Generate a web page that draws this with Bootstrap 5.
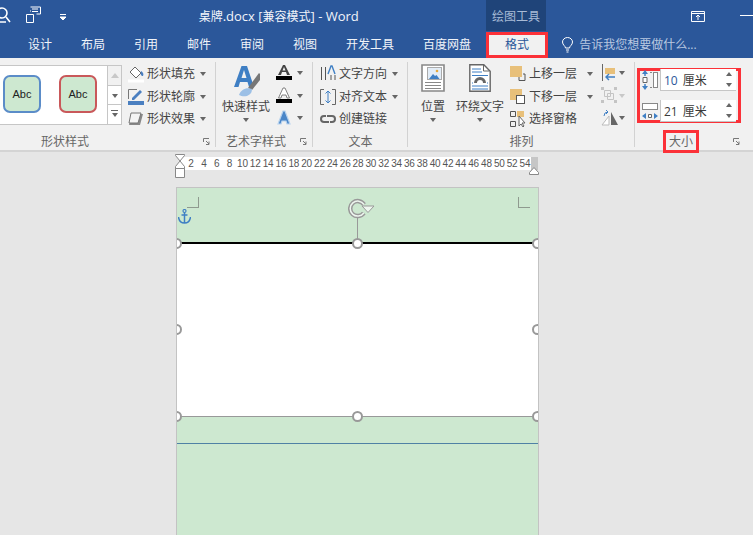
<!DOCTYPE html>
<html lang="zh"><head><meta charset="utf-8"><title>桌牌.docx - Word</title>
<link href="https://cdn.jsdelivr.net/npm/bootstrap@5.3.0/dist/css/bootstrap.min.css" rel="stylesheet">
<style>
html,body{height:535px;overflow:hidden;}
body{width:753px;background:#e6e6e6;font:12px/16px "Open Sans","Noto Sans CJK SC",sans-serif;color:#444;}
.title-bar{height:31px;background:#2b579a;color:#fff;position:relative;}
.qa-icons{width:199px;padding-top:6px;}
.qa-one{margin-left:-4px;margin-right:13px;}
.qa-two{margin-right:18px;}
.qa-three{margin-top:8px;}
.doc-title{width:288px;font-size:13px;line-height:33px;color:#f2f5fa;}
.han-s{font-size:12px;}
.tool-head{width:60px;background:#1f4479;color:#a8bbd6;line-height:33px;text-align:center;}
.win-up{margin-left:145px;margin-top:11px;}
.win-min{margin-left:35px;margin-top:15px;width:13px;height:1px;background:#fff;}
.tab-row{height:27px;background:#2b579a;color:#fff;padding-left:28px;line-height:27px;}
.tab-one{margin-right:29px;color:#f1f4f9;}
.tab-gap{margin-right:15px;}
.tab-now{width:62px;height:26px;margin-right:13px;margin-top:1px;background:#f1f1f1;color:#2b579a;text-align:center;line-height:20px;border:3px solid #fb3138;}
.tell-me{color:#b9c8e0;}
.tell-me svg{margin-right:5px;}
.ribbon{height:94px;background:#f1f1f1;border-bottom:2px solid #d4d4d4;}
.rib-group{height:85px;position:relative;flex:none;padding-top:5px;}
.rib-group::after{content:"";position:absolute;right:0;top:4px;height:85px;width:1px;background:#d2d2d2;}
.gr-a{width:216px;}.gr-b{width:97px;padding-left:6px;}.gr-c{width:95px;padding-left:7px;}.gr-d{width:227px;padding-left:13px;}.gr-e{width:111px;padding-left:2px;}
.gr-e::after{display:none;}
.rib-label{position:absolute;left:0;right:0;top:75px;text-align:center;line-height:18px;color:#666;}
.lab-a{right:86px;}.lab-b{right:17px;}
.launch{position:absolute;right:6px;top:80px;}
.gallery{width:122px;height:60px;margin-top:2px;background:#fff;border:1px solid #c6c6c6;border-left:0;margin-right:6px;flex:none;}
.thumb-list{width:108px;padding-left:3px;padding-top:9px;gap:18px;}
.thumb{width:38px;height:38px;border:2px solid #5b8cc8;border-radius:7px;background:#cde8d0;color:#222;font:11px/34px "Liberation Sans",sans-serif;text-align:center;}
.thumb-red{border-color:#c9585a;}
.scrolls{width:14px;border-left:1px solid #c6c6c6;}
.scroll-one{height:20px;border-bottom:1px solid #c6c6c6;background:#f1f1f1;}
.scroll-two{height:19px;border-bottom:1px solid #c6c6c6;}
.scroll-up{width:0;height:0;border:4px solid transparent;border-bottom:5px solid #c8c8c8;border-top:0;margin-top:7px;}
.scroll-more{width:7px;border-top:1px solid #666;padding-top:2px;margin-top:5px;}
.scroll-more .dn{display:block;margin:0 0 0 .5px;}
.rib-row{height:22.5px;white-space:nowrap;}
.rib-row svg{flex:none;margin-right:3px;}
.dn{display:inline-block;width:0;height:0;border:3px solid transparent;border-top:4px solid #666;border-bottom:0;margin-left:5px;flex:none;}
.dn-wide{margin-left:10px;}
.dn-faint{border-top-color:#c8c8c8;}
.big-btn{text-align:center;white-space:nowrap;flex:none;}
.big-btn .dn{display:block;margin:3px auto 0;}
.big-icon{height:36px;display:flex;align-items:flex-start;justify-content:center;padding-top:1px;}
.art-col{margin-left:6px;margin-top:-1px;}
.art-col .dn{margin-left:2px;}
.btn-place{margin-right:11px;}
.btn-wrap{margin-right:6px;}
.arr-col{margin-left:8px;margin-top:-1px;}
.arr-col svg{margin-right:0;}
.size-box{position:absolute;left:2px;top:10px;width:104px;height:55px;border:3px solid #fb3138;}
.size-row{height:22px;margin-top:-2px;}
.size-row+.size-row{margin-top:9px;}
.spin{width:76px;height:22px;margin-left:2px;background:#fff;border-bottom:1px solid #c6c6c6;border-left:1px solid #c6c6c6;line-height:24px;padding-left:3px;position:relative;color:#3a3a3a;word-spacing:2px;}
.spin-val{color:#2b579a;}
.spin-up,.spin-down{position:absolute;right:4px;width:0;height:0;border:3px solid transparent;}
.spin-up{top:3px;border-bottom:4px solid #666;border-top:0;}
.spin-down{bottom:3px;border-top:4px solid #666;border-bottom:0;}
.size-label{position:absolute;left:28px;top:72px;width:36px;height:23px;border:3px solid #fb3138;text-align:center;line-height:17px;color:#666;background:#f1f1f1;}
.work{height:383px;position:relative;}
.ruler-wrap{margin-left:175px;height:35px;position:relative;padding-top:5px;}
.ruler{margin-left:5px;width:351px;height:13px;background:#fff;font:10px/13px "Liberation Sans",sans-serif;color:#555;padding-left:4.6px;overflow:hidden;}
.ruler span{width:12.85px;text-align:center;flex:none;letter-spacing:-.2px;}
.ruler-end{width:7px;height:13px;background:#c6c6c6;}
.mark-left{position:absolute;left:0;top:2px;}
.mark-right{position:absolute;left:354px;top:15px;}
.doc-page{width:363px;margin-left:176px;height:352px;background:#cde8d0;border:1px solid #c3c3c3;border-bottom:0;overflow:hidden;position:relative;}
.head-zone{height:56px;border-bottom:2px solid #000;}
.shape-body{height:173px;background:#fff;border-bottom:1px solid #999;}
.foot-gap{height:27px;border-bottom:1px solid #4f81a5;}
.crop-tl,.crop-tr{position:absolute;top:9px;width:12px;height:11px;border-bottom:1px solid #8f9a8f;}
.crop-tl{left:10px;border-right:1px solid #8f9a8f;}
.crop-tr{left:341px;border-left:1px solid #8f9a8f;}
.anchor{position:absolute;left:1px;top:21px;}
.rotate{position:absolute;left:171px;top:10px;}
.stem{position:absolute;left:180px;top:30px;width:1px;height:25px;background:#999;}
.knob{position:absolute;width:11px;height:11px;border-radius:50%;background:#fff;border:2px solid #999;}
.k1{left:-6px;top:50px;}.k2{left:175px;top:50px;}.k3{left:355px;top:50px;}
.k4{left:-6px;top:136px;}.k5{left:355px;top:136px;}
.k6{left:-6px;top:223px;}.k7{left:175px;top:223px;}.k8{left:355px;top:223px;}
</style></head><body>
<div class="title-bar d-flex">
  <div class="qa-icons d-flex">
    <svg class="qa-one" width="16" height="18" viewBox="0 0 16 18"><circle cx="6" cy="7" r="5" fill="none" stroke="#fff" stroke-width="1.6"/><path d="M10 11l4 5M1 13v3h9" stroke="#fff" stroke-width="1.6" fill="none"/></svg>
    <svg class="qa-two" width="17" height="17" viewBox="0 0 17 17"><path d="M1.500 8.500h7v8h-7zM5.500 5.500v-1M5.500 1h10v7h-4" stroke="#fff" fill="none"/><path d="M7 3h6M7 5.500h6" stroke="#fff"/></svg>
    <svg class="qa-three" width="6" height="8" viewBox="0 0 6 8"><path d="M0 .5h6M0 3l3 3 3-3z" stroke="#fff" stroke-width="1" fill="#fff"/></svg>
  </div>
  <div class="doc-title"><span class="han-s">桌牌</span>.docx [<span class="han-s">兼容模式</span>] - Word</div>
  <div class="tool-head">绘图工具</div>
  <svg class="win-up" width="14" height="11" viewBox="0 0 14 11"><path d="M.5 .5h13v10H.5zM.5 2.500h13M7 9V4M5 6l2-2 2 2" stroke="#fff" fill="none"/></svg>
  <div class="win-min"></div>
</div>
<div class="tab-row d-flex">
  <div class="tab-one">设计</div><div class="tab-one">布局</div><div class="tab-one">引用</div><div class="tab-one">邮件</div><div class="tab-one">审阅</div><div class="tab-one">视图</div><div class="tab-one">开发工具</div><div class="tab-one tab-gap">百度网盘</div>
  <div class="tab-now">格式</div>
  <div class="tell-me d-flex align-items-center"><svg width="13" height="16" viewBox="0 0 13 16"><path d="M4.500 11c0-2-3-3-3-6a5 4.500 0 0 1 10 0c0 3-3 4-3 6zM5 13h3M5.500 15h2" stroke="#fff" fill="none"/></svg>告诉我您想要做什么...</div>
</div>
<div class="ribbon d-flex">
  <div class="rib-group gr-a d-flex">
    <div class="gallery d-flex">
      <div class="thumb-list d-flex"><div class="thumb">Abc</div><div class="thumb thumb-red">Abc</div></div>
      <div class="scrolls">
        <div class="scroll-one d-flex justify-content-center"><span class="scroll-up"></span></div>
        <div class="scroll-two d-flex justify-content-center"><span class="dn m-0 mt-2"></span></div>
        <div class="d-flex justify-content-center"><span class="scroll-more"><span class="dn"></span></span></div>
      </div>
    </div>
    <div>
      <div class="rib-row d-flex align-items-center"><svg width="16" height="17" viewBox="0 0 16 17"><path d="M0 15h16" stroke="#fff" stroke-width="3"/><path d="M2 6l5-5 6 6-5 5z" fill="#fff" stroke="#666"/><path d="M13 5c2 1 3 3 2 5-2 0-3-2-2-5z" fill="#4a7fc0"/></svg>形状填充<span class="dn"></span></div>
      <div class="rib-row d-flex align-items-center"><svg width="16" height="17" viewBox="0 0 16 17"><path d="M.5 11V1.500H9" stroke="#777" fill="none"/><path d="M4 10l8-8 2 2-8 8H4z" fill="#4a7fc0"/><rect y="13" width="16" height="4" fill="#4a7fc0"/></svg>形状轮廓<span class="dn"></span></div>
      <div class="rib-row d-flex align-items-center"><svg width="16" height="17" viewBox="0 0 16 17"><path d="M4 3h11l-3 11H1z" fill="#888"/><path d="M3 2h10l-3 10H1z" fill="#f4f4f4" stroke="#777"/></svg>形状效果<span class="dn"></span></div>
    </div>
    <div class="rib-label lab-a">形状样式</div>
    <svg class="launch" width="7" height="7" viewBox="0 0 7 7"><path d="M.5 4V.5H6M3 3l3 3M6 3.500V6.500H3" stroke="#777" fill="none"/></svg>
  </div>
  <div class="rib-group gr-b d-flex">
    <div class="big-btn">
      <div class="big-icon"><svg width="30" height="34" viewBox="0 0 30 34"><path d="M3 23L10.500 2h5.500L23 23h-5l-1.500-5h-7.500l-1.500 5zM10.500 14h5L13 6z" fill="#3f7fc4" fill-rule="evenodd"/><path d="M17 24l11-15 1 1v6l-8 10z" fill="#777"/><path d="M8 31c2-6 8-8 13-6 0 7-8 9-13 6z" fill="#9cc0e6"/></svg></div>
      快速样式<span class="dn"></span>
    </div>
    <div class="art-col">
      <div class="rib-row d-flex align-items-center"><svg width="16" height="18" viewBox="0 0 16 18"><path d="M2 11L7 1h2l5 10h-3l-1-3H6l-1 3zM6.500 6.500h3L8 3z" fill="#444" fill-rule="evenodd"/><rect y="12" width="16" height="4"/></svg><span class="dn"></span></div>
      <div class="rib-row d-flex align-items-center"><svg width="16" height="18" viewBox="0 0 16 18"><path d="M2.500 11L7 1h2L13.500 11h-2.500l-1-3H6l-1 3z" fill="#fff" stroke="#666" stroke-width=".8"/><rect y="12" width="16" height="4"/></svg><span class="dn"></span></div>
      <div class="rib-row d-flex align-items-center"><svg width="16" height="18" viewBox="0 0 16 18"><path d="M2 15L7 2h2l5 13h-3l-1-3H6l-1 3z" fill="#4a86c8" stroke="#b9d3ee" stroke-width="1.200"/></svg><span class="dn"></span></div>
    </div>
    <div class="rib-label lab-b">艺术字样式</div>
    <svg class="launch" width="7" height="7" viewBox="0 0 7 7"><path d="M.5 4V.5H6M3 3l3 3M6 3.500V6.500H3" stroke="#777" fill="none"/></svg>
  </div>
  <div class="rib-group gr-c">
    <div class="rib-row d-flex align-items-center"><svg width="16" height="18" viewBox="0 0 16 18"><path d="M1.500 2v13M5.500 2v13M15 10v5M11 10v5" stroke="#555"/><path d="M8 9l3-8h1l3 8" stroke="#3f7fc4" fill="none" stroke-width="1.400"/></svg>文字方向<span class="dn"></span></div>
    <div class="rib-row d-flex align-items-center"><svg width="16" height="18" viewBox="0 0 16 18"><path d="M4 1.500H.5v15H4M12 1.500h3.500v15H12" stroke="#666" fill="none"/><path d="M8 3v12M5.500 5.500L8 3l2.500 2.500M5.500 12.500L8 15l2.500-2.500" stroke="#3f7fc4" fill="none"/></svg>对齐文本<span class="dn"></span></div>
    <div class="rib-row d-flex align-items-center"><svg width="16" height="18" viewBox="0 0 16 18"><path d="M6 6H4a3 3 0 0 0 0 6h5M10 12h2a3 3 0 0 0 0-6H7" stroke="#666" fill="none" stroke-width="2"/></svg>创建链接</div>
    <div class="rib-label">文本</div>
  </div>
  <div class="rib-group gr-d d-flex">
    <div class="big-btn btn-place">
      <div class="big-icon"><svg width="24" height="28" viewBox="0 0 24 28"><path d="M1 1h22v26H1z" fill="#fff" stroke="#888" stroke-width="1.600"/><rect x="6.500" y="3.500" width="14" height="12" fill="#e3edf7" stroke="#aaa"/><path d="M8 15l4-5 2 2 1.500-1 3 4z" fill="#3f7fc4"/><circle cx="16" cy="7" r="1.300" fill="#e6a93c"/><path d="M4 18.500h16M4 21.500h16M4 24.500h16" stroke="#888"/></svg></div>
      位置<span class="dn"></span>
    </div>
    <div class="big-btn btn-wrap">
      <div class="big-icon"><svg width="22" height="28" viewBox="0 0 22 28"><path d="M.8 .8h14l6.400 6.400v20H.8z" fill="#fff" stroke="#666" stroke-width="1.400"/><path d="M14.500 1v6h6" fill="none" stroke="#666"/><path d="M3 5h9M3 8h10" stroke="#3f7fc4"/><path d="M5 19a6 6 0 0 1 12 0h-3a3 3 0 0 0-6 0z" fill="#666"/><path d="M3 11.500h16M3 19h1M18 19h1M3 22h16M3 25h16" stroke="#3f7fc4"/></svg></div>
      环绕文字<span class="dn"></span>
    </div>
    <div>
      <div class="rib-row d-flex align-items-center"><svg width="16" height="18" viewBox="0 0 16 18"><path d="M9 10.500v5h6V9h-2" stroke="#555" fill="none"/><rect y="1" width="12" height="11" fill="#e8c07a"/></svg>上移一层<span class="dn dn-wide"></span></div>
      <div class="rib-row d-flex align-items-center"><svg width="16" height="18" viewBox="0 0 16 18"><rect y="1" width="12" height="11" fill="#e8c07a"/><rect x="6.500" y="7.500" width="8" height="8" fill="#fff" stroke="#555"/></svg>下移一层<span class="dn dn-wide"></span></div>
      <div class="rib-row d-flex align-items-center"><svg width="16" height="18" viewBox="0 0 16 18"><path d="M.5 1.500h5v5h-5zM.5 11.500h5v5h-5z" fill="none" stroke="#555"/><rect x="7" y="1" width="7" height="6" fill="#e8c07a"/><path d="M9 6v10l2-2 2 3 1-1-2-3h3z" fill="#fff" stroke="#666"/></svg>选择窗格</div>
    </div>
    <div class="arr-col">
      <div class="rib-row d-flex align-items-center"><svg width="18" height="18" viewBox="0 0 18 18"><path d="M1.500 0v17" stroke="#666"/><rect x="4" y="4" width="10" height="6" fill="#e8c07a"/><path d="M14 13H5M8 10l-3 3 3 3" stroke="#3f7fc4" stroke-width="1.400" fill="none"/></svg><span class="dn m-0"></span></div>
      <div class="rib-row d-flex align-items-center"><svg width="18" height="18" viewBox="0 0 18 18"><path d="M0 0h3v3H0zM13 0h3v3h-3zM0 13h3v3H0zM13 13h3v3h-3z" fill="#c4c4c4"/><path d="M3.500 3.500h6v6h-6zM6.500 6.500h6v6h-6z" fill="none" stroke="#c4c4c4"/></svg><span class="dn dn-faint m-0"></span></div>
      <div class="rib-row d-flex align-items-center"><svg width="18" height="18" viewBox="0 0 18 18"><path d="M10 3v13h7z" fill="#666"/><path d="M8 7v9H1z" fill="#fff" stroke="#bbb"/><path d="M3 7a4 4 0 0 1 4-4M5 1l2 2-2 2" stroke="#3f7fc4" fill="none"/></svg><span class="dn m-0"></span></div>
    </div>
    <div class="rib-label">排列</div>
  </div>
  <div class="rib-group gr-e">
    <div class="size-box">
      <div class="size-row d-flex">
        <svg width="18" height="22" viewBox="0 0 18 22"><path d="M5 4v3M5 15v3" stroke="#3f7fc4" stroke-width="1.500"/><path d="M2 5l3-4 3 4zM2 17l3 4 3-4z" fill="#3f7fc4"/><path d="M3 8.500h4v5H3z" fill="#fff" stroke="#666"/><path d="M10 3.500h2M10 18.500h2" stroke="#888"/><rect x="13.500" y="3.500" width="4" height="15" fill="#fff" stroke="#888"/></svg>
        <div class="spin"><span class="spin-val">10</span> 厘米<i class="spin-up"></i><i class="spin-down"></i></div>
      </div>
      <div class="size-row d-flex">
        <svg width="18" height="22" viewBox="0 0 18 22"><rect x="2.500" y="3.500" width="15" height="6" fill="#fff" stroke="#888"/><path d="M2 16l4-3v6zM18 16l-4-3v6z" fill="#3f7fc4"/><path d="M8.500 14.500h3v3h-3z" fill="#fff" stroke="#666"/></svg>
        <div class="spin">21 厘米<i class="spin-up"></i><i class="spin-down"></i></div>
      </div>
    </div>
    <div class="size-label">大小</div>
    <svg class="launch" width="7" height="7" viewBox="0 0 7 7"><path d="M.5 4V.5H6M3 3l3 3M6 3.500V6.500H3" stroke="#777" fill="none"/></svg>
  </div>
</div>
<div class="work">
  <div class="ruler-wrap">
    <svg class="mark-left" width="10" height="24" viewBox="0 0 10 24"><path d="M.5 .5h9v1L5 7 .5 1.500zM5 7l4.500 5.500v2h-9v-2zM.5 14.500h9v9h-9z" fill="#fff" stroke="#888"/></svg>
    <div class="d-flex">
      <div class="ruler d-flex"><span>2</span><span>4</span><span>6</span><span>8</span><span>10</span><span>12</span><span>14</span><span>16</span><span>18</span><span>20</span><span>22</span><span>24</span><span>26</span><span>28</span><span>30</span><span>32</span><span>34</span><span>36</span><span>38</span><span>40</span><span>42</span><span>44</span><span>46</span><span>48</span><span>50</span><span>52</span><span>54</span></div>
      <div class="ruler-end"></div>
    </div>
    <svg class="mark-right" width="10" height="8" viewBox="0 0 10 8"><path d="M.5 7.500v-2L5 .5l4.500 5v2z" fill="#fff" stroke="#888"/></svg>
  </div>
  <div class="doc-page">
    <div class="head-zone"></div>
    <div class="shape-body"></div>
    <div class="foot-gap"></div>
    <div class="crop-tl"></div><div class="crop-tr"></div>
    <svg class="anchor" width="13" height="15" viewBox="0 0 13 15"><circle cx="6.500" cy="2" r="1.500" fill="none" stroke="#3f7fc4" stroke-width="1.200"/><path d="M6.500 3.500V14M3.500 6h6M.5 8c.5 4 3 6 6 6s5.500-2 6-6" fill="none" stroke="#3f7fc4" stroke-width="1.500"/></svg>
    <svg class="rotate" width="27" height="21" viewBox="0 0 27 21"><path d="M16 6.500A7.500 7.500 0 1 0 15.800 15" fill="none" stroke="#999" stroke-width="4.500"/><path d="M16 6.500A7.500 7.500 0 1 0 15.800 15" fill="none" stroke="#eef6ef" stroke-width="1.500"/><path d="M14 8h12l-6 6.500z" fill="#eef6ef" stroke="#999"/></svg>
    <div class="stem"></div>
    <div class="knob k1"></div><div class="knob k2"></div><div class="knob k3"></div><div class="knob k4"></div><div class="knob k5"></div><div class="knob k6"></div><div class="knob k7"></div><div class="knob k8"></div>
  </div>
</div>
<script src="https://cdn.jsdelivr.net/npm/bootstrap@5.3.0/dist/js/bootstrap.bundle.min.js"></script>
</body></html>
